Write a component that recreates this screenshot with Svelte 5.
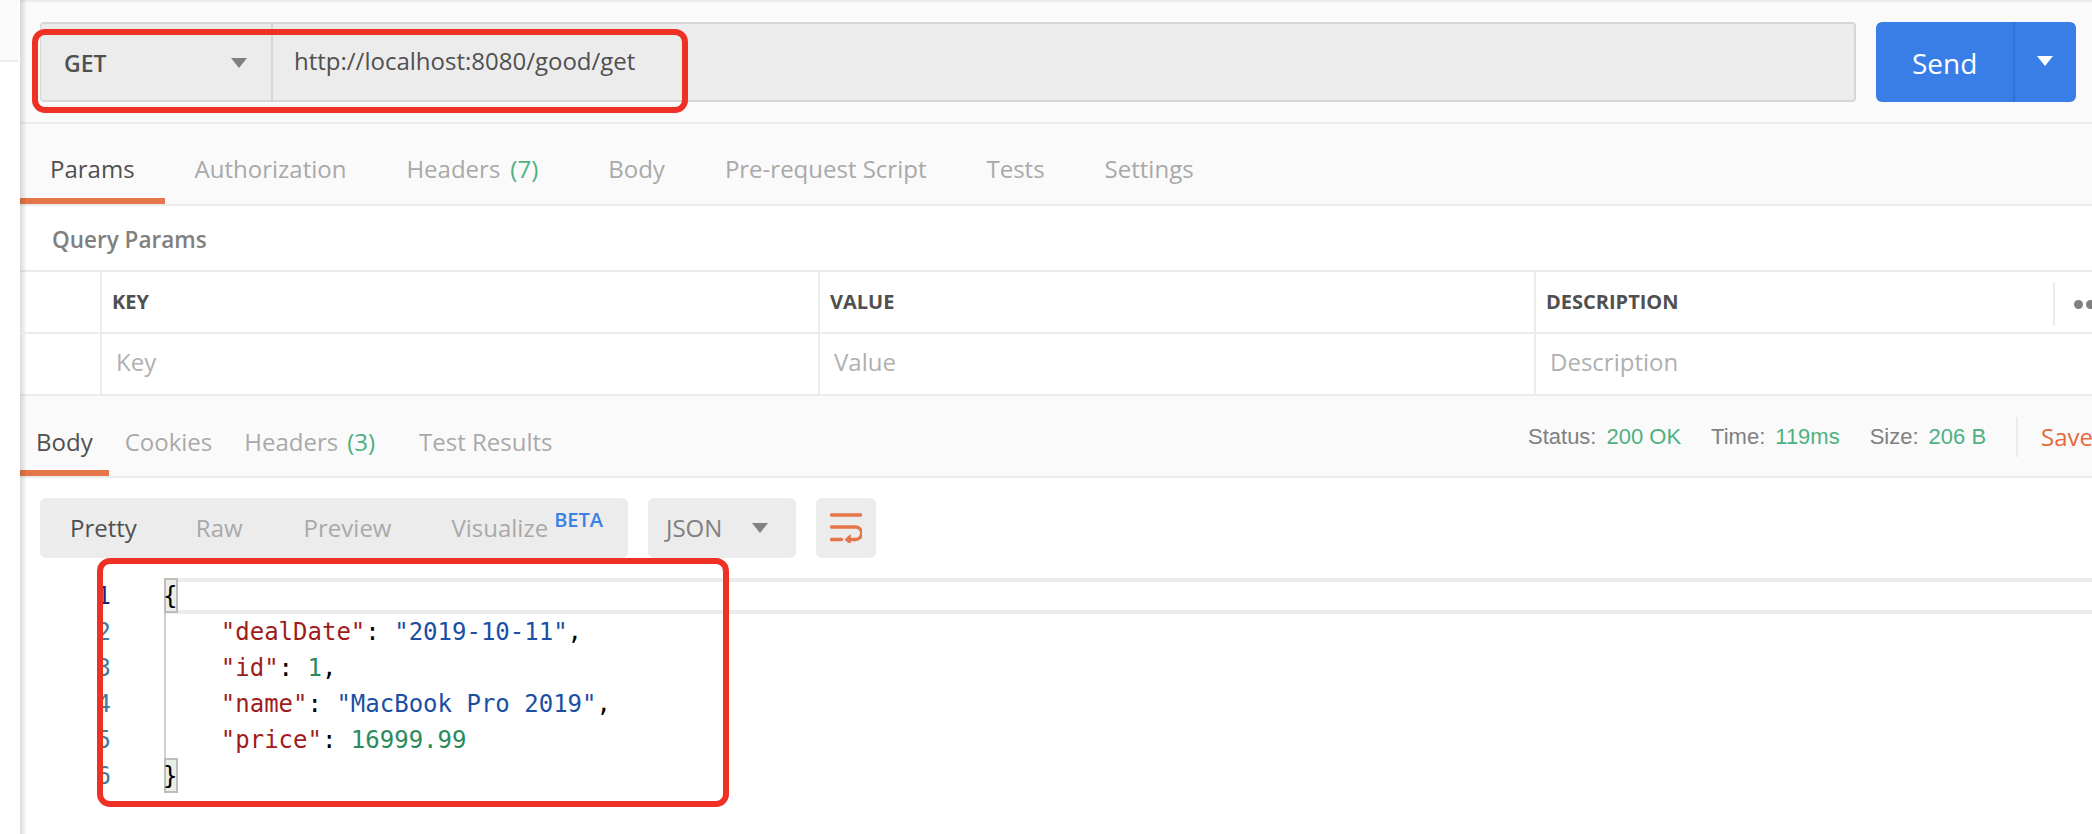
<script>
  const requestTabs = [
    { label: "Params", active: true },
    { label: "Authorization" },
    { label: "Headers", count: "(7)", wide: true },
    { label: "Body" },
    { label: "Pre-request Script" },
    { label: "Tests" },
    { label: "Settings" }
  ];
  const responseTabs = [
    { label: "Body", active: true },
    { label: "Cookies" },
    { label: "Headers", count: "(3)" },
    { label: "Test Results", gap: true }
  ];
  const stats = [
    { label: "Status:", value: "200 OK" },
    { label: "Time:", value: "119ms" },
    { label: "Size:", value: "206 B" }
  ];
</script>

<div class="app">
  <div class="rail"><div class="rail-top"></div></div>

  <main>
    <header>
      <div class="url-bar">
        <div class="method">
          <span>GET</span>
          <i class="caret"></i>
        </div>
        <div class="url">http://localhost:8080/good/get</div>
      </div>
      <div class="send">
        <span class="send-label">Send</span>
        <span class="send-more"><i class="caret white"></i></span>
      </div>
    </header>

    <nav class="req-tabs">
      {#each requestTabs as tab}
        <div class="req-tab" class:active={tab.active} class:wide={tab.wide}>
          {tab.label}{#if tab.count}<span class="count">{tab.count}</span>{/if}
        </div>
      {/each}
    </nav>

    <section class="params">
      <h3>Query Params</h3>
      <div class="table">
        <div class="cell"></div>
        <div class="cell head key">KEY</div>
        <div class="cell head">VALUE</div>
        <div class="cell head">DESCRIPTION
          <div class="more"><b></b><b></b></div>
        </div>
        <div class="cell last"></div>
        <div class="cell ph key last">Key</div>
        <div class="cell ph last">Value</div>
        <div class="cell ph last">Description</div>
      </div>
    </section>

    <div class="res-bar">
      <nav class="res-tabs">
        {#each responseTabs as tab}
          <div class="res-tab" class:active={tab.active} class:gap={tab.gap}>
            {tab.label}{#if tab.count}<span class="count">{tab.count}</span>{/if}
          </div>
        {/each}
      </nav>
      <div class="stats">
        {#each stats as s}
          <span class="stat">{s.label}<em>{s.value}</em></span>
        {/each}
        <span class="save">Save</span>
      </div>
    </div>

    <div class="toolbar">
      <div class="modes">
        <span class="mode on">Pretty</span>
        <span class="mode raw">Raw</span>
        <span class="mode preview">Preview</span>
        <span class="mode vis">Visualize<sup>BETA</sup></span>
      </div>
      <div class="format"><span>JSON</span><i class="caret"></i></div>
      <div class="wrap">
        <svg width="32" height="30" viewBox="0 0 32 30" fill="none" stroke="#e5764a" stroke-width="3.4" stroke-linecap="round">
          <path d="M1.5 2h29" />
          <path d="M1.5 14h24a5 5 0 0 1 0 12.500h-7" />
          <path d="M1.500 26.500h10" />
          <path d="M20 22l-5 4.500 5 4.500z" fill="#e5764a" stroke-width="1" />
        </svg>
      </div>
    </div>

    <div class="code">
      <div class="active-line"></div>
      <div class="guide"></div>
      <div class="match m1"></div>
      <div class="match m2"></div>
      <div class="line"><span class="no cur">1</span><span class="p">{"{"}</span></div>
      <div class="line"><span class="no">2</span><span class="p in"><span class="k">"dealDate"</span>: <span class="s">"2019-10-11"</span>,</span></div>
      <div class="line"><span class="no">3</span><span class="p in"><span class="k">"id"</span>: <span class="n">1</span>,</span></div>
      <div class="line"><span class="no">4</span><span class="p in"><span class="k">"name"</span>: <span class="s">"MacBook Pro 2019"</span>,</span></div>
      <div class="line"><span class="no">5</span><span class="p in"><span class="k">"price"</span>: <span class="n">16999.99</span></span></div>
      <div class="line"><span class="no">6</span><span class="p">{"}"}</span></div>
    </div>
  </main>

  <!-- hand-drawn annotations on top of the screenshot -->
  <div class="mark mark-url"></div>
  <div class="mark mark-body"></div>
</div>

<style>
  :global(body) {
    margin: 0;
    background: #fff;
  }

  .app {
    position: relative;
    display: flex;
    width: 2092px;
    height: 834px;
    overflow: hidden;
    font-family: "Open Sans", sans-serif;
    font-size: 24px;
    color: #505050;
    background: #fff;
  }

  .rail {
    width: 20px;
    flex: none;
    background: #fff;
  }

  .rail-top {
    height: 60px;
    width: 18px;
    background: #fafafa;
    border-bottom: 2px solid #ececec;
  }

  main {
    position: relative;
    flex: 1;
    min-width: 0;
  }

  /* shadow the sidebar drops over the main pane */
  main::before {
    content: "";
    position: absolute;
    left: 0;
    top: 0;
    bottom: 0;
    width: 7px;
    background: linear-gradient(to right, rgba(0, 0, 0, 0.14), rgba(0, 0, 0, 0));
  }

  header {
    box-sizing: border-box;
    height: 124px;
    display: flex;
    gap: 20px;
    padding: 20px 16px 20px 20px;
    background: #fafafa;
    border-top: 2px solid #ebebeb;
    border-bottom: 2px solid #ebebeb;
  }

  .url-bar {
    flex: 1;
    display: flex;
    background: #ececec;
    border: 2px solid #d6d6d6;
    border-left-width: 1px;
    border-radius: 4px;
    box-sizing: border-box;
    height: 80px;
  }

  .method {
    box-sizing: border-box;
    width: 232px;
    display: flex;
    align-items: center;
    justify-content: space-between;
    padding: 1px 24px 0 23px;
    font-weight: 600;
    font-size: 23px;
    border-right: 2px solid #d6d6d6;
    color: #505050;
  }

  .caret {
    display: block;
    width: 0;
    height: 0;
    border-left: 8px solid transparent;
    border-right: 8px solid transparent;
    border-top: 10px solid #808080;
  }

  .caret.white {
    border-top-color: #fff;
  }

  .url {
    padding: 0 0 0 21px;
    line-height: 74px;
    color: #505050;
  }

  .send {
    width: 200px;
    height: 80px;
    flex: none;
    display: flex;
    border-radius: 6px;
    background: #397ee6;
    color: #fff;
  }

  .send-label {
    box-sizing: border-box;
    width: 139px;
    padding-left: 36px;
    font-size: 28px;
    line-height: 83px;
    font-weight: 500;
    border-right: 2px solid #2f72d6;
  }

  .send-more {
    flex: 1;
    display: flex;
    align-items: center;
    justify-content: center;
    padding-right: 2px;
    padding-bottom: 2px;
  }

  .req-tabs {
    display: flex;
    height: 82px;
    box-sizing: border-box;
    background: #fafafa;
    border-bottom: 2px solid #ebebeb;
  }

  .req-tab {
    box-sizing: border-box;
    height: 80px;
    padding: 28px 30px 0;
    color: #a9a9a9;
    line-height: 34px;
  }

  .req-tab.wide {
    padding-right: 40px;
  }

  .req-tab.active {
    color: #505050;
    border-bottom: 6px solid #e5764a;
  }

  .count {
    margin-left: 10px;
    color: #4eb083;
  }

  .params h3 {
    margin: 0;
    height: 64px;
    box-sizing: border-box;
    padding: 16px 0 0 32px;
    font-size: 22.500px;
    font-weight: 600;
    line-height: 36px;
    color: #808080;
  }

  .table {
    display: grid;
    grid-template-columns: 80px 718px 716px 1fr;
    border-top: 2px solid #ebebeb;
    border-bottom: 2px solid #ebebeb;
  }

  .cell {
    position: relative;
    box-sizing: border-box;
    height: 62px;
    border-bottom: 2px solid #ebebeb;
    border-left: 2px solid #ebebeb;
    padding-left: 10px;
    line-height: 60px;
  }

  .cell:nth-child(4n + 1) {
    border-left: 0;
  }

  .cell.last {
    height: 60px;
    border-bottom: 0;
    line-height: 56px;
  }

  .head {
    font-size: 20px;
    font-weight: 700;
    color: #505050;
  }

  .ph {
    padding-left: 14px;
    color: #b0b0b0;
  }

  .more {
    position: absolute;
    left: 517px;
    top: 10px;
    height: 44px;
    padding-left: 19px;
    border-left: 2px solid #ebebeb;
    display: flex;
    gap: 3px;
    align-items: center;
  }

  .more b {
    width: 9px;
    height: 9px;
    border-radius: 50%;
    background: #808080;
  }

  .res-bar {
    display: flex;
    justify-content: space-between;
    height: 82px;
    box-sizing: border-box;
    background: #fafafa;
    border-bottom: 2px solid #ebebeb;
  }

  .res-tabs {
    display: flex;
  }

  .res-tab {
    box-sizing: border-box;
    height: 80px;
    padding: 29px 16px 0;
    line-height: 34px;
    color: #a9a9a9;
    white-space: nowrap;
  }

  .res-tab.gap {
    margin-left: 12px;
  }

  .res-tab.active {
    color: #505050;
    border-bottom: 6px solid #e5764a;
  }

  .res-tab .count {
    margin-left: 9px;
  }

  .stats {
    display: flex;
    align-items: center;
    height: 80px;
    padding-top: 2px;
    font-family: "Liberation Sans", sans-serif;
    font-size: 22px;
    color: #808080;
    width: 564px;
    box-sizing: border-box;
  }

  .stat {
    margin-right: 30px;
    white-space: nowrap;
  }

  .stat em {
    font-style: normal;
    color: #4eb083;
    margin-left: 10px;
  }

  .save {
    font-family: "Open Sans", sans-serif;
    font-size: 24px;
    color: #e5693c;
    padding-left: 23px;
    line-height: 40px;
    border-left: 2px solid #ebebeb;
  }

  .toolbar {
    display: flex;
    height: 60px;
    margin: 20px 0 0 20px;
  }

  .modes,
  .format,
  .wrap {
    background: #ececec;
    border-radius: 6px;
    height: 60px;
    line-height: 60px;
    box-sizing: border-box;
  }

  .modes {
    display: flex;
    width: 588px;
    padding-left: 30px;
    color: #a9a9a9;
  }

  .mode.on {
    color: #505050;
  }

  .mode.raw {
    margin-left: 59px;
  }

  .mode.preview {
    margin-left: 61px;
  }

  .mode.vis {
    margin-left: 60px;
    white-space: nowrap;
  }

  sup {
    font-size: 20px;
    font-weight: 600;
    line-height: 0;
    margin-left: 6px;
    color: #3b82e6;
    position: relative;
    top: -1px;
    vertical-align: super;
  }

  .format {
    display: flex;
    align-items: center;
    justify-content: space-between;
    width: 148px;
    margin-left: 20px;
    padding: 0 28px 0 18px;
    color: #808080;
  }

  .wrap {
    width: 60px;
    margin-left: 20px;
    display: flex;
    align-items: center;
    justify-content: center;
  }

  .code {
    position: relative;
    margin-top: 20px;
    font-family: "DejaVu Sans Mono", monospace;
    font-size: 24px;
    line-height: 36px;
    color: #000;
  }

  .line {
    position: relative;
    display: flex;
    height: 36px;
  }

  .no {
    box-sizing: border-box;
    width: 91px;
    text-align: right;
    color: #3f7c99;
  }

  .no.cur {
    color: #1a237e;
  }

  .p {
    margin-left: 52px;
    white-space: pre;
  }

  .p.in {
    padding-left: 4ch;
  }

  .k { color: #a01c1c; }
  .s { color: #1a4fa3; }
  .n { color: #2b8a5c; }

  .active-line {
    position: absolute;
    left: 144px;
    right: 0;
    top: 0;
    height: 36px;
    box-sizing: border-box;
    border-top: 4px solid #ececec;
    border-bottom: 4px solid #ececec;
  }

  .guide {
    position: absolute;
    left: 144px;
    top: 35px;
    width: 2px;
    height: 145px;
    background: #cfcfcf;
  }

  .match {
    position: absolute;
    left: 144px;
    width: 14px;
    height: 35px;
    box-sizing: border-box;
    border: 2px solid #bdbdbd;
    background: #eaeee6;
  }

  .m1 { top: 0; }
  .m2 { top: 180px; }

  .mark {
    position: absolute;
    box-sizing: border-box;
    border: 6px solid #ee3124;
    border-radius: 13px;
  }

  .mark-url {
    left: 32px;
    top: 29px;
    width: 656px;
    height: 84px;
  }

  .mark-body {
    left: 97px;
    top: 558px;
    width: 632px;
    height: 249px;
  }
</style>
